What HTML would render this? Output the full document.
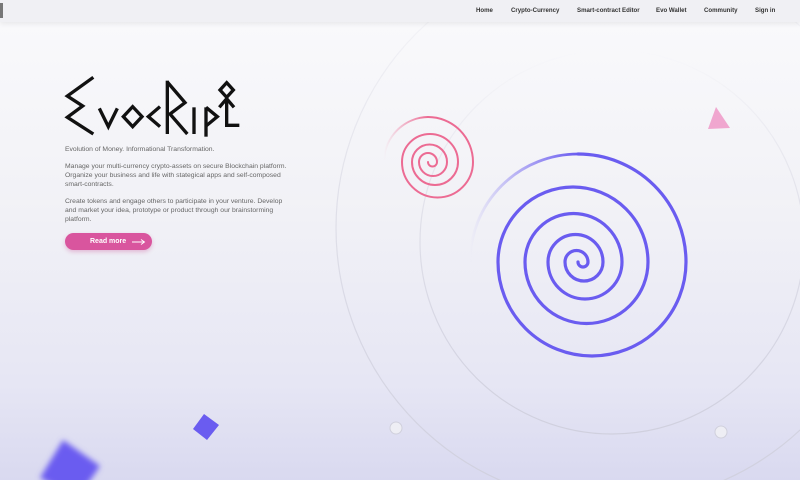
<!DOCTYPE html>
<html><head><meta charset="utf-8"><style>
html,body{margin:0;padding:0}
body{width:800px;height:480px;overflow:hidden;position:relative;font-family:"Liberation Sans",sans-serif;background:linear-gradient(180deg,#fafafc 0%,#f1f1f6 45%,#e6e6f4 80%,#d9d9f0 100%)}
.hdr{position:absolute;left:0;top:0;width:800px;height:22px;background:#f0f0f4;box-shadow:0 2px 5px rgba(0,0,0,.07);z-index:3}
.hdr .bar{position:absolute;left:0;top:3px;width:3px;height:15px;background:#777}
.hdr a{position:absolute;top:7px;font-size:6.1px;font-weight:bold;color:#333;text-decoration:none;white-space:nowrap}
.txt{position:absolute;left:65px;font-size:6.8px;color:#666;line-height:9px;white-space:nowrap}
.btn{position:absolute;left:65px;top:233px;width:87px;height:17px;border-radius:9px;background:#d9559e;box-shadow:0 2px 4px rgba(200,60,140,.3);color:#fff;font-size:7px;font-weight:bold}
.btn span{position:absolute;left:25px;top:5px}
</style></head><body>
<svg width="800" height="480" style="position:absolute;left:0;top:0">
<defs>
<filter id="bl"><feGaussianBlur stdDeviation="3"/></filter>
<linearGradient id="gg" x1="0" y1="0" x2="0" y2="1"><stop offset="0" stop-color="#d4d4e0" stop-opacity="0"/><stop offset="0.45" stop-color="#d4d4e0" stop-opacity="0.6"/><stop offset="1" stop-color="#d0d0de"/></linearGradient>
<linearGradient id="tl" x1="0" y1="0" x2="1" y2="0"><stop offset="0" stop-color="#6a5cf0" stop-opacity="0"/><stop offset="1" stop-color="#6a5cf0"/></linearGradient>
<linearGradient id="tp" x1="0" y1="0" x2="1" y2="0"><stop offset="0" stop-color="#ec6b93" stop-opacity="0"/><stop offset="1" stop-color="#ec6b93"/></linearGradient>
</defs>
<circle cx="612" cy="242" r="192" fill="none" stroke="url(#gg)" stroke-width="1.2"/>
<circle cx="612" cy="228" r="276" fill="none" stroke="url(#gg)" stroke-width="1.2"/>
<circle cx="396" cy="428" r="6" fill="#eeeef4" stroke="#d0d0dc" stroke-width="1"/>
<circle cx="721" cy="432" r="6" fill="#eeeef4" stroke="#d0d0dc" stroke-width="1"/>
<path d="M428 162 A4.5 4.5 0 0 0 437 162 A9 9 0 0 0 419 162 A14 14 0 0 0 447 162 A17.5 17.5 0 0 0 412 162 A23 23 0 0 0 458 162 A28 28 0 0 0 402 162 A35.5 35.5 0 0 0 473 162 A45 45 0 0 0 428 117" fill="none" stroke="#ec6b93" stroke-width="2" stroke-linecap="round"/>
<path d="M428 117 A45 45 0 0 0 384 160" fill="none" stroke="url(#tp)" stroke-width="2"/>
<path d="M578 262 A5 5 0 0 0 588 262 A11.5 11.5 0 0 0 565 262 A19 19 0 0 0 603 262 A27.5 27.5 0 0 0 548 262 A37 37 0 0 0 622 262 A48.5 48.5 0 0 0 525 262 A61.5 61.5 0 0 0 648 262 A75 75 0 0 0 498 262 A94 94 0 0 0 686 262 A108 108 0 0 0 578 154" fill="none" stroke="#6a5cf0" stroke-width="3.2" stroke-linecap="round"/>
<path d="M578 154 A108 108 0 0 0 470 262" fill="none" stroke="url(#tl)" stroke-width="2.8"/>
<polygon points="716,107 730,128 708,129" fill="#f0a6cf"/>
<polygon points="204,414 219,425 207,440 193,429" fill="#6a5cf0"/>
<polygon points="63,440 100,466 78,498 40,478" fill="#6a5cf0" filter="url(#bl)"/>
</svg>
<div class="hdr"><div class="bar"></div>
<a style="left:476px">Home</a><a style="left:511px">Crypto-Currency</a><a style="left:577px">Smart-contract Editor</a><a style="left:656px">Evo Wallet</a><a style="left:704px">Community</a><a style="left:755px">Sign in</a></div>
<svg width="190" height="70" viewBox="0 0 570 210" style="position:absolute;left:60px;top:70px">
<g fill="none" stroke="#111" stroke-width="10" stroke-linejoin="miter" stroke-linecap="butt">
<polyline points="100,22 22,78 68,108 22,142 100,192"/>
<polyline points="118,115 145,170 172,115"/>
<polygon points="190,140 218,110 246,140 218,170"/>
<polyline points="300,110 265,140 300,170"/>
<line x1="322" y1="32" x2="322" y2="192"/>
<polyline points="322,36 375,98 330,132 382,192"/>
<line x1="402" y1="112" x2="402" y2="192"/>
<line x1="438" y1="112" x2="438" y2="200"/>
<polyline points="438,112 472,140 438,168"/>
<polygon points="500,38 520,60 500,82 480,60"/>
<polyline points="478,112 500,86 522,112"/>
<polyline points="500,86 500,166 538,166"/>
</g></svg>
<div class="txt" style="top:145px">Evolution of Money. Informational Transformation.</div>
<div class="txt" style="top:162px">Manage your multi-currency crypto-assets on secure Blockchain platform.<br>Organize your business and life with stategical apps and self-composed<br>smart-contracts.</div>
<div class="txt" style="top:197px">Create tokens and engage others to participate in your venture. Develop<br>and market your idea, prototype or product through our brainstorming<br>platform.</div>
<div class="btn"><span>Read more</span>
<svg width="14" height="6" style="position:absolute;left:67px;top:6px"><path d="M0 3H12M9 0.5L12.5 3L9 5.5" fill="none" stroke="#fff" stroke-width="0.9"/></svg></div>
</body></html>
